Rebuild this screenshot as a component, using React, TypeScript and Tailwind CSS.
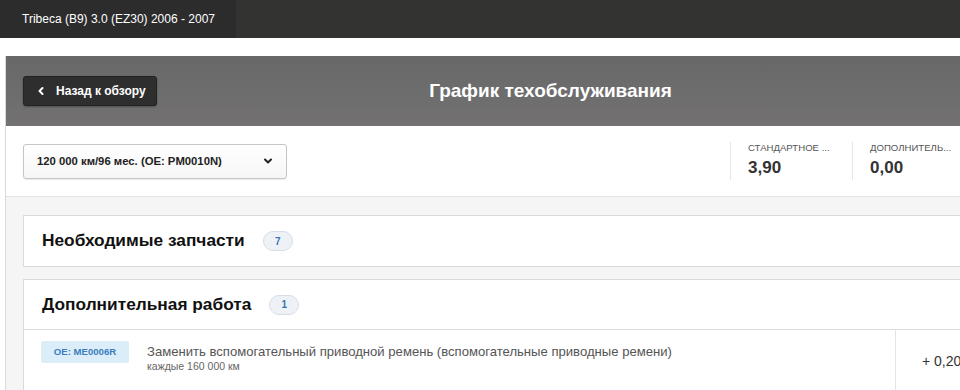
import { ChevronLeft, ChevronDown } from 'lucide-react';

const font = { fontFamily: '"Liberation Sans", Arial, sans-serif' };

function CountBadge({ n }: { n: number }) {
  return (
    <span className="ml-[18px] inline-flex h-[20px] w-[30px] items-center justify-center rounded-full border border-[#d6dde6] bg-[#eef2f7] text-[10px] font-bold text-[#3a74b3]">
      {n}
    </span>
  );
}

function Stat({ label, value }: { label: string; value: string }) {
  return (
    <div className="flex h-[38px] w-[122px] flex-col border-l border-[#e6e6e6] pl-[17px]">
      <span className="text-[9.6px] uppercase leading-[12px] text-[#555]">{label}</span>
      <span className="mt-[4px] text-[17px] font-bold leading-[20px] text-[#333]">{value}</span>
    </div>
  );
}

export default function App() {
  return (
    <div className="h-[390px] w-[960px] overflow-hidden bg-white" style={font}>
      {/* Top bar */}
      <div className="flex h-[38px] bg-[#333332]">
        <div className="flex w-[236px] items-center bg-[#2c2c2c] pl-[22px] text-[12px] text-white">
          Tribeca (B9) 3.0 (EZ30) 2006 - 2007
        </div>
      </div>

      <div className="h-[18px]" />

      {/* Panel */}
      <div className="ml-[5px] w-[1090px] border-l border-[#d9d9d9]">
        {/* Header */}
        <div className="grid h-[70px] grid-cols-[1fr_auto_1fr] items-center bg-gradient-to-b from-[#686868] to-[#737172] px-[17px]">
          <div>
            <button className="flex h-[30px] w-[134px] items-center gap-[9px] rounded-[3px] border border-[#222] bg-[#2e2e2e] pl-[11px] text-[12px] font-bold text-white shadow-[0_1px_2px_rgba(0,0,0,0.3)]">
              <ChevronLeft className="h-[12px] w-[12px]" strokeWidth={4} />
              Назад к обзору
            </button>
          </div>
          <h1 className="text-[19px] font-bold text-white">График техобслуживания</h1>
          <div />
        </div>

        {/* Filter row */}
        <div className="flex h-[71px] items-center border-b border-[#e3e3e3] bg-white pl-[17px]">
          <button className="flex h-[35px] w-[264px] items-center justify-between rounded-[3px] border border-[#c6c6c6] bg-gradient-to-b from-white to-[#f6f6f6] pl-[13px] pr-[12px] text-[11.3px] font-bold text-[#222] shadow-[0_1px_1px_rgba(0,0,0,0.08)]">
            120 000 км/96 мес. (OE: PM0010N)
            <ChevronDown className="h-[12px] w-[12px]" strokeWidth={4} />
          </button>
          <div className="ml-[443px] flex">
            <Stat label="Стандартное ..." value="3,90" />
            <Stat label="Дополнитель..." value="0,00" />
          </div>
        </div>

        {/* Content */}
        <div className="flex flex-col gap-[12px] bg-[#f5f5f5] pl-[17px] pt-[18px]">
          <div className="flex h-[52px] items-center border border-[#dadada] bg-white pl-[18px]">
            <h2 className="text-[17.3px] font-bold text-[#111]">Необходимые запчасти</h2>
            <CountBadge n={7} />
          </div>

          <div className="border border-[#dadada] bg-white">
            <div className="flex h-[50px] items-center border-b border-[#dcdcdc] pl-[18px]">
              <h2 className="text-[17.3px] font-bold text-[#111]">Дополнительная работа</h2>
              <CountBadge n={1} />
            </div>
            <div className="flex h-[80px]">
              <div className="flex w-[871px] items-start pl-[17px] pt-[11px]">
                <span className="flex h-[22px] w-[88px] items-center justify-center rounded-[2px] bg-[#dcedfa] text-[9.6px] font-bold text-[#3b7dbd]">
                  OE: ME0006R
                </span>
                <div className="ml-[18px] flex flex-col pt-[3px]">
                  <span className="text-[13.1px] leading-[15px] text-[#555]">
                    Заменить вспомогательный приводной ремень (вспомогательные приводные ремени)
                  </span>
                  <span className="mt-[1px] text-[10.5px] leading-[13px] text-[#666]">каждые 160 000 км</span>
                </div>
              </div>
              <div className="flex flex-1 border-l border-[#e3e3e3] pl-[26px] pt-[21px] text-[14px] text-[#333]">
                + 0,20
              </div>
            </div>
          </div>
        </div>
      </div>
    </div>
  );
}
